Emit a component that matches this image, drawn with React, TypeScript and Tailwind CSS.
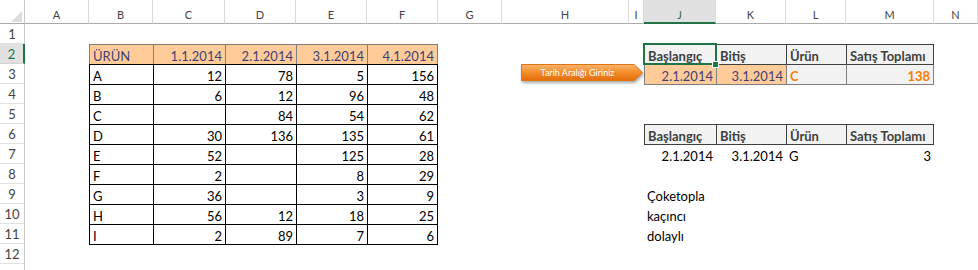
import React from 'react'

const COLS = ['A', 'B', 'C', 'D', 'E', 'F', 'G', 'H', 'I', 'J', 'K', 'L', 'M', 'N']

const leftTable = [
  ['ÜRÜN', '1.1.2014', '2.1.2014', '3.1.2014', '4.1.2014'],
  ['A', '12', '78', '5', '156'],
  ['B', '6', '12', '96', '48'],
  ['C', '', '84', '54', '62'],
  ['D', '30', '136', '135', '61'],
  ['E', '52', '', '125', '28'],
  ['F', '2', '', '8', '29'],
  ['G', '36', '', '3', '9'],
  ['H', '56', '12', '18', '25'],
  ['I', '2', '89', '7', '6'],
]

const heads = ['Başlangıç', 'Bitiş', 'Ürün', 'Satış Toplamı']

type CellSpec = { text?: string; cls: string }

// r: sheet row (1..13), c: column index (A = 0)
function getCell(r: number, c: number): CellSpec {
  if (c >= 1 && c <= 5) {
    if (r >= 2 && r <= 11) {
      const text = leftTable[r - 2][c - 1]
      const align = c === 1 ? '' : 'justify-end'
      const right = c === 5 ? 'border-r' : ''
      if (r === 2)
        return {
          text,
          cls: `bg-[#ffcc99] text-[#3f3f76] border-l border-t border-[#7f7f7f] ${right} ${align}`,
        }
      return { text, cls: `text-black border-l border-t border-black ${right} ${align}` }
    }
    if (r === 12) return { cls: 'border-t border-black' }
  }

  if (c >= 9 && c <= 12) {
    const right = c === 12 ? 'border-r' : ''
    if (r === 2 || r === 6)
      return {
        text: heads[c - 9],
        cls: `bg-[#f2f2f2] text-[#3f3f3f] font-bold border-l border-t border-[#3f3f3f] ${right}`,
      }
    if (r === 3) {
      if (c === 9 || c === 10)
        return {
          text: c === 9 ? '2.1.2014' : '3.1.2014',
          cls: 'bg-[#ffcc99] text-[#3f3f76] border-l border-t border-[#3f3f3f] border-l-[#7f7f7f] justify-end',
        }
      return {
        text: c === 11 ? 'C' : '138',
        cls: `bg-[#f2f2f2] text-[#fa7d00] font-bold border-l border-t border-[#3f3f3f] border-l-[#7f7f7f] border-r-[#7f7f7f] ${right} ${c === 12 ? 'justify-end' : ''}`,
      }
    }
    if (r === 4) return { cls: 'border-t border-[#7f7f7f]' }
    if (r === 7) {
      const vals = ['2.1.2014', '3.1.2014', 'G', '3']
      return {
        text: vals[c - 9],
        cls: `text-black border-t border-[#3f3f3f] ${c === 11 ? '' : 'justify-end'}`,
      }
    }
    if (c === 9 && r >= 9 && r <= 11) {
      const notes = ['Çoketopla', 'kaçıncı', 'dolaylı']
      return { text: notes[r - 9], cls: 'text-black' }
    }
  }
  return { cls: '' }
}

const rows = Array.from({ length: 13 }, (_, i) => i + 1)

export default function App() {
  return (
    <div className="relative w-[978px] h-[270px] overflow-hidden bg-white font-['Lato',sans-serif]">
      <div className="grid grid-cols-[25px_64px_64px_72px_71px_71px_71px_64px_127px_15px_72px_70px_60px_88px_44px] grid-rows-[24px_repeat(13,20px)]">
        {/* corner */}
        <div className="relative border-r border-b border-[#c8c8c8] border-b-[#ababab]">
          <svg className="absolute left-[11px] top-[11px]" width="11" height="11" viewBox="0 0 11 11">
            <polygon points="11,0 11,11 0,11" fill="#dcdcdc" />
          </svg>
        </div>
        {COLS.map((col) => (
          <div
            key={col}
            className={
              col === 'J'
                ? 'flex items-end justify-center pb-[1px] text-[11px] leading-[12px] text-[#217346] bg-[#e1e1e1] border-r border-[#dadada] border-b-2 border-b-[#217346]'
                : 'flex items-end justify-center pb-[2px] text-[11px] leading-[12px] text-[#444] border-r border-b border-[#dadada] border-b-[#ababab]'
            }
          >
            {col}
          </div>
        ))}

        {rows.map((r) => (
          <React.Fragment key={r}>
            <div
              className={
                r === 2
                  ? 'flex items-center justify-center text-[13px] leading-[16px] text-[#217346] bg-[#e1e1e1] border-b border-b-[#d4d4d4] border-r-2 border-r-[#217346]'
                  : 'flex items-center justify-center text-[13px] leading-[16px] text-[#444] border-b border-r border-[#e1e1e1] border-r-[#c8c8c8]'
              }
            >
              {r < 13 ? r : ''}
            </div>
            {COLS.map((_, c) => {
              const cell = getCell(r, c)
              return (
                <div
                  key={c}
                  className={`flex items-end overflow-hidden whitespace-nowrap px-[3px] text-[13px] leading-[16px] ${cell.cls}`}
                >
                  {cell.text}
                </div>
              )
            })}
          </React.Fragment>
        ))}
      </div>

      {/* shape: arrow button */}
      <div className="absolute left-[521px] top-[64px] w-[124px] h-[20px]">
        <svg width="124" height="20" viewBox="0 0 124 20" className="absolute left-0 top-0 drop-shadow-[1px_2px_1.5px_rgba(0,0,0,0.35)]">
          <defs>
            <linearGradient id="arrowFill" x1="0" y1="0" x2="0" y2="1">
              <stop offset="0" stopColor="#fbb46e" />
              <stop offset="0.45" stopColor="#f4902e" />
              <stop offset="1" stopColor="#e46c0a" />
            </linearGradient>
          </defs>
          <polygon points="0.5,0.5 113,0.5 121.5,8.5 113,16.5 0.5,16.5" fill="url(#arrowFill)" stroke="#e27512" strokeWidth="1" />
        </svg>
        <div className="absolute left-0 top-0 w-[113px] h-[17px] flex items-center justify-center text-[9px] leading-[10px] text-white">
          Tarih Aralığı Giriniz
        </div>
      </div>

      {/* active cell selection */}
      <div className="absolute left-[643px] top-[43px] w-[74px] h-[22px] border-2 border-[#217346]" />
      <div className="absolute left-[712px] top-[61px] w-[7px] h-[7px] bg-[#217346] border border-white" />
    </div>
  )
}
